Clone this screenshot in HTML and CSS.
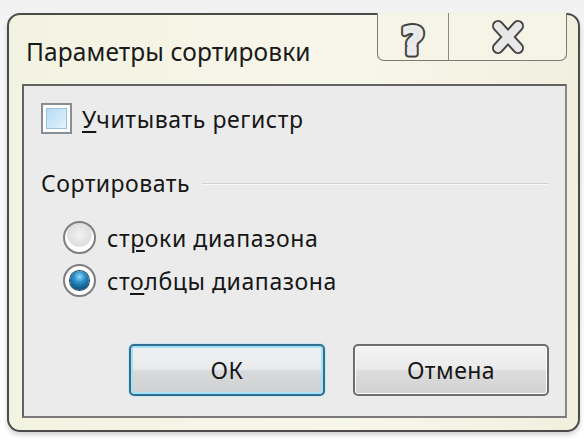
FILE: index.html
```html
<!DOCTYPE html>
<html lang="ru">
<head>
<meta charset="utf-8">
<title>Параметры сортировки</title>
<link rel="stylesheet" href="styles.css">
</head>
<body>
<div class="window">
  <div class="titlebar">
    <div class="title">Параметры сортировки</div>
    <div class="caption">
      <div class="cbtn help">
        <svg width="44" height="46" viewBox="0 0 44 46">
          <text x="22" y="40" text-anchor="middle" class="glyph go">?</text>
          <text x="22" y="40" text-anchor="middle" class="glyph gi">?</text>
        </svg>
      </div>
      <div class="cbtn close">
        <svg width="44" height="44" viewBox="0 0 44 44">
          <path d="M12 11 L32 33 M32 11 L12 33" class="xo"/>
          <path d="M12 11 L32 33 M32 11 L12 33" class="xi"/>
        </svg>
      </div>
    </div>
  </div>
  <div class="client">
    <div class="checkrow">
      <span class="checkbox"><span class="checkinner"></span></span>
      <span class="label"><u>У</u>читывать регистр</span>
    </div>
    <div class="group">
      <span class="grouptitle">Сортировать</span>
      <span class="groupline"></span>
    </div>
    <div class="radios">
      <div class="radiorow">
        <span class="radio"></span>
        <span class="label">ст<u>р</u>оки диапазона</span>
      </div>
      <div class="radiorow">
        <span class="radio checked"><span class="dot"></span></span>
        <span class="label">ст<u>о</u>лбцы диапазона</span>
      </div>
    </div>
    <div class="buttons">
      <div class="btn default">ОК</div>
      <div class="btn">Отмена</div>
    </div>
  </div>
</div>
</body>
</html>
```
FILE: styles.css
```css
html, body {
  margin: 0;
  padding: 0;
}
body {
  width: 584px;
  height: 446px;
  background: linear-gradient(#f0f0f0, #f6f6f6 30px, #ffffff);
  font-family: "Noto Sans", "Open Sans", sans-serif;
  color: #161616;
  overflow: hidden;
}
.window {
  box-sizing: border-box;
  margin: 13px 0 0 7px;
  width: 573px;
  height: 419px;
  border: 2px solid #4b4b4b;
  border-radius: 13px;
  background: linear-gradient(90deg, #f3f3e2, #f7f6ea 60%, #f1f0df);
  box-shadow: 0 3px 5px rgba(0,0,0,0.18);
  display: flex;
  flex-direction: column;
}
.titlebar {
  height: 69px;
  display: flex;
  justify-content: space-between;
  align-items: flex-start;
}
.title {
  margin: 22px 0 0 17px;
  font-size: 24.5px;
  letter-spacing: 0.1px;
  line-height: 30px;
  color: #1a1a1a;
}
.caption {
  display: flex;
  margin: -2px 11px 0 0;
  height: 48px;
  box-sizing: border-box;
  border: 1px solid #7a7a72;
  border-top: none;
  border-radius: 0 0 7px 7px;
  background: #f5f4e6;
}
.cbtn {
  display: flex;
  align-items: center;
  justify-content: center;
}
.cbtn svg {
  overflow: visible;
}
.help {
  width: 70px;
  border-right: 1px solid #8a8a82;
}
.close {
  width: 117px;
}
.glyph {
  font-family: "DejaVu Sans", sans-serif;
  font-weight: bold;
  font-size: 38px;
}
.go {
  fill: #404040;
  stroke: #404040;
  stroke-width: 7px;
  stroke-linejoin: round;
}
.gi {
  fill: #e6e6e6;
  stroke: #ececec;
  stroke-width: 3px;
  stroke-linejoin: round;
}
.xo {
  stroke: #454545;
  stroke-width: 12;
  stroke-linecap: round;
  fill: none;
}
.xi {
  stroke: #e8e8e8;
  stroke-width: 8;
  stroke-linecap: round;
  fill: none;
}
.client {
  box-sizing: border-box;
  margin: 0 11px 0 13px;
  height: 334px;
  border: 2px solid #626262;
  border-right-color: #8a8a8a;
  border-bottom-color: #7a7a7a;
  background: #ebebeb;
  padding: 17px 0 0 17px;
  display: flex;
  flex-direction: column;
}
.label {
  font-size: 23px;
  letter-spacing: 0.6px;
  line-height: 30px;
  color: #161616;
}
.label u {
  text-underline-offset: 3px;
  text-decoration-thickness: 2px;
}
.checkrow {
  display: flex;
  align-items: center;
  gap: 10px;
}
.checkbox {
  box-sizing: border-box;
  width: 31px;
  height: 31px;
  border: 2px solid #8a8e92;
  background: #fafcfe;
  padding: 3px;
  display: flex;
}
.checkinner {
  flex: 1;
  border: 1px solid #9cc3dc;
  background: linear-gradient(135deg, #b6dcf4, #e2f2fd);
}
.group {
  display: flex;
  align-items: center;
  margin-top: 34px;
  margin-right: 17px;
  gap: 12px;
}
.grouptitle {
  font-size: 23px;
  letter-spacing: 0.5px;
  line-height: 30px;
}
.groupline {
  flex: 1;
  height: 1px;
  background: #cfcfcf;
  border-bottom: 1px solid #f8f8f8;
  margin-top: 2px;
}
.radios {
  margin: 23px 0 0 22px;
  display: flex;
  flex-direction: column;
  gap: 10px;
}
.radiorow {
  display: flex;
  align-items: center;
  gap: 11px;
}
.radio {
  box-sizing: border-box;
  width: 33px;
  height: 33px;
  border-radius: 50%;
  border: 2px solid #7e7e7e;
  background: radial-gradient(circle at 50% 40%, #f2f2f2 0, #dedede 52%, #ffffff 57%, #ffffff 100%);
  display: flex;
  align-items: center;
  justify-content: center;
}
.radio.checked {
  background: radial-gradient(circle, #ffffff 60%, #f0f0f0 100%);
}
.dot {
  width: 19px;
  height: 19px;
  border-radius: 50%;
  background: radial-gradient(circle at 50% 30%, #8fd8ff 0, #2d8fc6 35%, #0c4f7c 80%, #0a3c60 100%);
  box-shadow: 0 0 0 1px #123c58;
}
.buttons {
  display: flex;
  gap: 28px;
  margin: 47px 0 0 88px;
}
.btn {
  box-sizing: border-box;
  width: 196px;
  height: 52px;
  border: 2px solid #6e6e6e;
  border-radius: 5px;
  background: linear-gradient(#f3f3f3, #ebebeb 48%, #dcdcdc 52%, #d2d2d2);
  box-shadow: inset 0 0 0 1px #fbfbfb;
  display: flex;
  align-items: center;
  justify-content: center;
  font-size: 23px;
  letter-spacing: 0.45px;
  color: #161616;
}
.btn.default {
  border-color: #2f6e90;
  box-shadow: inset 0 0 0 2px #a4e2f7, 0 0 2px #8fd4ef;
  background: linear-gradient(#eef1f2, #e9eaeb 48%, #d8d9da 52%, #cfd1d2);
}
```
